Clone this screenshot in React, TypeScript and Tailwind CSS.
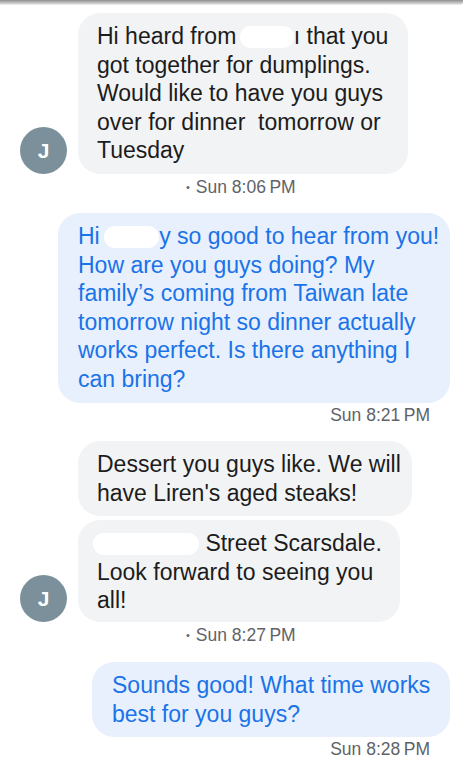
import React from "react";

const Blob = ({ w, className = "" }: { w: string; className?: string }) => (
  <span className={`inline-block ${w} h-[22px] rounded-full bg-white align-[-4px] ${className}`} />
);

const Avatar = () => (
  <div className="w-[47px] h-[47px] rounded-full bg-[#7b909b] flex items-center justify-center text-white text-[21px] font-semibold shrink-0" style={{ fontFamily: '"Liberation Sans", Arial, sans-serif' }}>
    J
  </div>
);

export default function App() {
  return (
    <div className="w-[469px] h-[768px] bg-white overflow-hidden" style={{ fontFamily: '"Liberation Sans", Arial, sans-serif' }}>
      <div className="h-[5px] w-[463px] bg-gradient-to-b from-[#8f8f8f] via-[#bdbdbd] to-[#f2f2f2] rounded-br-[3px]" />

      {/* Incoming 1 */}
      <div className="flex items-end pl-[20px] mt-[8px]">
        <Avatar />
        <div className="ml-[11px] w-[330px] h-[161px] rounded-[22px] bg-[#f2f3f5] px-[19px] py-[9px] text-[23px] leading-[28.5px] text-[#1c1c1c] whitespace-nowrap">
          Hi heard from <Blob w="w-[54px]" className="-ml-[3px]" />ı that you
          <br />got together for dumplings.
          <br />Would like to have you guys
          <br />over for dinner&nbsp; tomorrow or
          <br />Tuesday
        </div>
      </div>
      <div className="pl-[186px] h-[26px] flex items-center text-[17.5px] text-[#5f6368]">
        <span className="text-[11px] mr-[6px]">•</span>Sun 8:06&#8239;PM
      </div>

      {/* Outgoing 1 */}
      <div className="flex justify-end pr-[19px] mt-[13px]">
        <div className="w-[392px] h-[190px] rounded-[22px] bg-[#e8f0fd] px-[20px] py-[9px] text-[23px] leading-[28.5px] text-[#1a73e8] whitespace-nowrap">
          Hi <Blob w="w-[55px]" className="-ml-[2px]" />y so good to hear from you!
          <br />How are you guys doing? My
          <br />family’s coming from Taiwan late
          <br />tomorrow night so dinner actually
          <br />works perfect. Is there anything I
          <br />can bring?
        </div>
      </div>
      <div className="pr-[39px] h-[24px] flex items-center justify-end text-[17.5px] text-[#5f6368]">
        Sun 8:21&#8239;PM
      </div>

      {/* Incoming 2 */}
      <div className="pl-[78px] mt-[14px]">
        <div className="w-[334px] h-[75px] rounded-[22px] bg-[#f2f3f5] px-[19px] py-[9px] text-[23px] leading-[28.5px] text-[#1c1c1c] whitespace-nowrap">
          Dessert you guys like. We will
          <br />have Liren's aged steaks!
        </div>
      </div>
      <div className="flex items-end pl-[20px] mt-[4px]">
        <Avatar />
        <div className="ml-[11px] w-[322px] h-[102px] rounded-[22px] bg-[#f2f3f5] px-[19px] py-[9px] text-[23px] leading-[28.5px] text-[#1c1c1c] whitespace-nowrap">
          <Blob w="w-[106px]" className="-ml-[4px]" /> Street Scarsdale.
          <br />Look forward to seeing you
          <br />all!
        </div>
      </div>
      <div className="pl-[186px] h-[26px] flex items-center text-[17.5px] text-[#5f6368]">
        <span className="text-[11px] mr-[6px]">•</span>Sun 8:27&#8239;PM
      </div>

      {/* Outgoing 2 */}
      <div className="flex justify-end pr-[19px] mt-[14px]">
        <div className="w-[358px] h-[75px] rounded-[22px] bg-[#e8f0fd] px-[20px] py-[9px] text-[23px] leading-[28.5px] text-[#1a73e8] whitespace-nowrap">
          Sounds good! What time works
          <br />best for you guys?
        </div>
      </div>
      <div className="pr-[39px] h-[24px] flex items-center justify-end text-[17.5px] text-[#5f6368]">
        Sun 8:28&#8239;PM
      </div>
    </div>
  );
}
